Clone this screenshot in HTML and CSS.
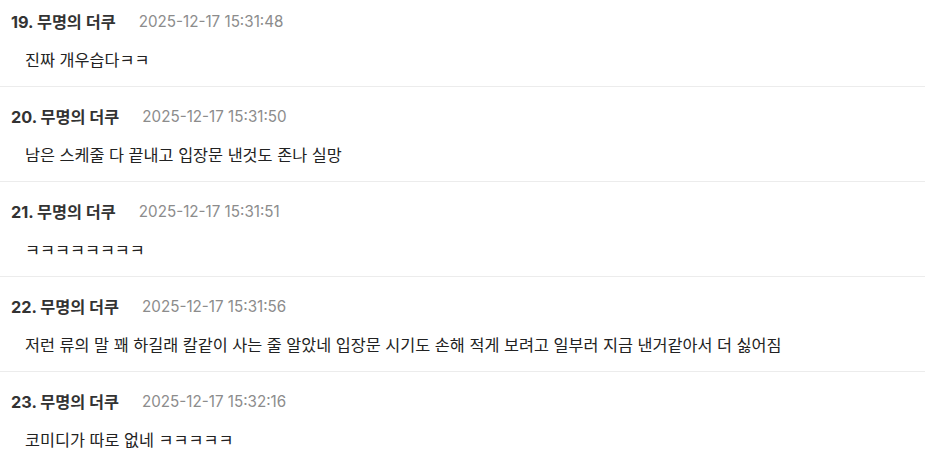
FILE: index.html
```html
<!DOCTYPE html>
<html lang="ko">
<head>
<meta charset="utf-8">
<title>댓글</title>
<link rel="stylesheet" href="styles.css">
</head>
<body>
<ul class="comments">
  <li class="comment">
    <div class="meta"><span class="author">19. 무명의 더쿠</span><span class="date">2025-12-17 15:31:48</span></div>
    <p class="text">진짜 개우습다ㅋㅋ</p>
  </li>
  <li class="comment">
    <div class="meta"><span class="author">20. 무명의 더쿠</span><span class="date">2025-12-17 15:31:50</span></div>
    <p class="text">남은 스케줄 다 끝내고 입장문 낸것도 존나 실망</p>
  </li>
  <li class="comment">
    <div class="meta"><span class="author">21. 무명의 더쿠</span><span class="date">2025-12-17 15:31:51</span></div>
    <p class="text">ㅋㅋㅋㅋㅋㅋㅋㅋ</p>
  </li>
  <li class="comment">
    <div class="meta"><span class="author">22. 무명의 더쿠</span><span class="date">2025-12-17 15:31:56</span></div>
    <p class="text">저런 류의 말 꽤 하길래 칼같이 사는 줄 알았네 입장문 시기도 손해 적게 보려고 일부러 지금 낸거같아서 더 싫어짐</p>
  </li>
  <li class="comment">
    <div class="meta"><span class="author">23. 무명의 더쿠</span><span class="date">2025-12-17 15:32:16</span></div>
    <p class="text">코미디가 따로 없네 ㅋㅋㅋㅋㅋ</p>
  </li>
</ul>
</body>
</html>
```
FILE: styles.css
```css
html, body {
  margin: 0;
  padding: 0;
  background: #fff;
}
body {
  font-family: "Inter", "Noto Sans CJK KR", sans-serif;
  color: #222;
}
.comments {
  list-style: none;
  margin: -8px 0 0 0;
  padding: 0;
}
.comment {
  padding: 19px 11px 15px 11px;
  border-bottom: 1px solid #ececec;
  display: flex;
  flex-direction: column;
  gap: 16px;
}
.meta {
  display: flex;
  align-items: center;
  gap: 23px;
  height: 22px;
  line-height: 22px;
}
.author {
  font-size: 16.3px;
  font-weight: 700;
  color: #333;
}
.date {
  font-size: 15.2px;
  color: #8c8c8c;
}
.text {
  margin: 0;
  padding-left: 14px;
  font-size: 16.3px;
  line-height: 22px;
  color: #222;
}
```
